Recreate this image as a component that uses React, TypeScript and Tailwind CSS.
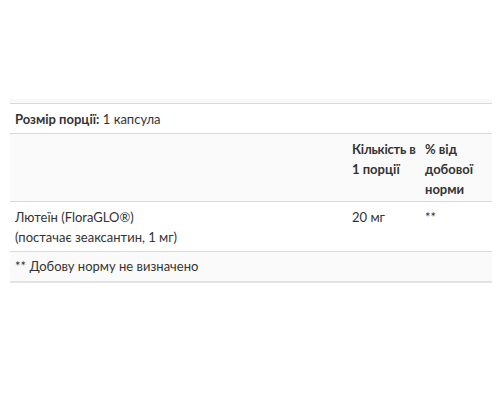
import React from 'react'

export default function App() {
  return (
    <div className="w-[500px] h-[400px] bg-white pt-[99px] pl-[10px] pr-[8px]" style={{ fontFamily: 'Lato, "Noto Sans", sans-serif' }}>
      <div className="h-[4px] bg-[#f8f8f8]" />
      <table className="w-full border-collapse text-[13px] leading-[20px] text-[#333]">
        <colgroup>
          <col />
          <col className="w-[73px]" />
          <col className="w-[72px]" />
        </colgroup>
        <tbody>
          <tr className="border-t border-[#d9d9d9]">
            <td colSpan={3} className="h-[30px] px-[5px] py-0 align-middle">
              <span className="font-bold">Розмір порції:</span> 1 капсула
            </td>
          </tr>
          <tr className="border-t border-[#d9d9d9] bg-[#fafafa] font-bold">
            <td className="h-[66px] px-[5px]" />
            <td className="pl-[5px] pr-0 pt-[5px] pb-[2px] align-top">
              <span className="whitespace-nowrap tracking-[-0.2px]">Кількість в</span> 1 порції
            </td>
            <td className="px-[5px] pt-[5px] pb-[2px] align-top">% від добової норми</td>
          </tr>
          <tr className="border-t border-[#d9d9d9]">
            <td className="h-[50px] px-[5px] pt-[5px] align-top">
              Лютеїн (FloraGLO®)
              <br />
              (постачає зеаксантин, 1 мг)
            </td>
            <td className="px-[5px] pt-[5px] align-top">20 мг</td>
            <td className="px-[5px] pt-[5px] align-top">**</td>
          </tr>
          <tr className="border-t border-[#d9d9d9] border-b-2 border-b-[#e2e2e2] bg-[#fafafa]">
            <td colSpan={3} className="h-[30px] px-[5px] align-middle">** Добову норму не визначено</td>
          </tr>
        </tbody>
      </table>
    </div>
  )
}
